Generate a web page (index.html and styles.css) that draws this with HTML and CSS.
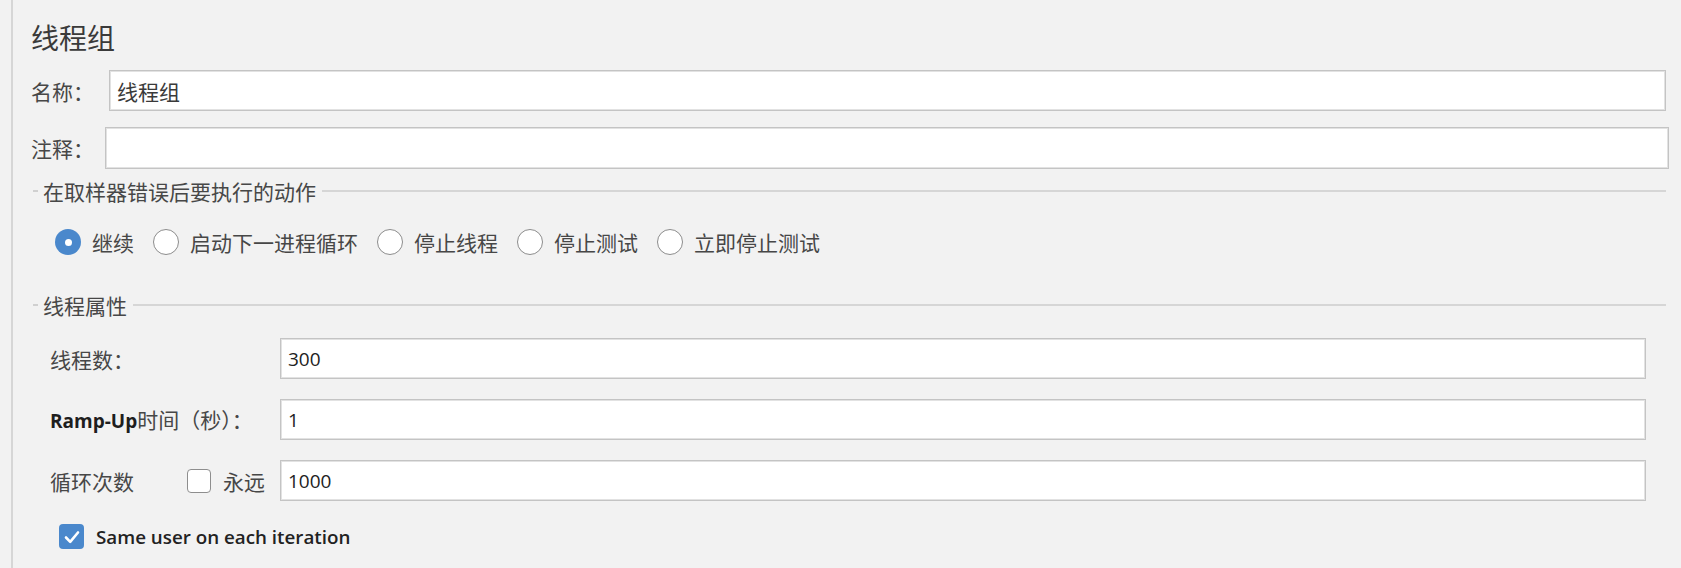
FILE: index.html
```html
<!DOCTYPE html>
<html lang="zh-CN">
<head>
<meta charset="utf-8">
<title>线程组</title>
<link rel="stylesheet" href="styles.css">
</head>
<body>
<div class="panel">
  <div class="title">线程组</div>

  <div class="row row-name">
    <div class="label label-name">名称：</div>
    <div class="field">线程组</div>
  </div>
  <div class="row row-comment">
    <div class="label label-comment">注释：</div>
    <div class="field field-comment"></div>
  </div>

  <div class="section-head section-error">
    <span class="tick"></span>
    <span class="section-title">在取样器错误后要执行的动作</span>
    <span class="rule"></span>
  </div>
  <div class="radios">
    <div class="radio-item"><span class="radio checked"></span><span class="radio-text">继续</span></div>
    <div class="radio-item"><span class="radio"></span><span class="radio-text">启动下一进程循环</span></div>
    <div class="radio-item"><span class="radio"></span><span class="radio-text">停止线程</span></div>
    <div class="radio-item"><span class="radio"></span><span class="radio-text">停止测试</span></div>
    <div class="radio-item"><span class="radio"></span><span class="radio-text">立即停止测试</span></div>
  </div>

  <div class="section-head section-props">
    <span class="tick"></span>
    <span class="section-title">线程属性</span>
    <span class="rule"></span>
  </div>
  <div class="props">
    <div class="prop-row">
      <div class="prop-label">线程数：</div>
      <div class="field num">300</div>
    </div>
    <div class="prop-row">
      <div class="prop-label"><span class="latin bold">Ramp-Up</span>时间（秒）：</div>
      <div class="field num">1</div>
    </div>
    <div class="prop-row">
      <div class="prop-label loop-label">
        <span class="loop-text">循环次数</span>
        <span class="checkbox"></span>
        <span class="forever">永远</span>
      </div>
      <div class="field num">1000</div>
    </div>
  </div>
  <div class="same-user">
    <span class="checkbox checked"><svg viewBox="0 0 24 24" width="24" height="24"><path d="M6 12.5 L10.2 16.8 L18 7.5" fill="none" stroke="#ffffff" stroke-width="2.6" stroke-linecap="round" stroke-linejoin="round"/></svg></span>
    <span class="latin same-text">Same user on each iteration</span>
  </div>
</div>
</body>
</html>
```

FILE: styles.css
```css
html, body {
  margin: 0;
  padding: 0;
  background: #f2f2f2;
}

body {
  font-family: "Noto Sans CJK SC", "Open Sans", sans-serif;
  font-size: 21px;
  color: #474747;
  height: 568px;
  overflow: hidden;
}

.panel {
  margin-left: 11px;
  border-left: 2px solid #d6d6d6;
  height: 568px;
  box-sizing: border-box;
  padding: 19px 0 0 18px;
}

.title {
  font-size: 28px;
  line-height: 36px;
  color: #3a3a3a;
  height: 36px;
}

.row {
  display: flex;
  align-items: center;
}

.row-name {
  margin-top: 15px;
  height: 41px;
  margin-right: 15px;
}

.row-comment {
  margin-top: 16px;
  height: 42px;
  margin-right: 12px;
}

.label {
  flex: none;
  line-height: 24px;
}

.label-name { width: 78px; }
.label-comment { width: 74px; }

.field {
  flex: 1;
  height: 100%;
  box-sizing: border-box;
  background: #ffffff;
  border: 1px solid #c4c4c4;
  box-shadow: inset 0 0 0 1px #e2e2e2;
  padding: 0 7px;
  display: flex;
  align-items: center;
  color: #3a3a3a;
}

.section-head {
  display: flex;
  align-items: center;
  height: 24px;
  margin-left: 2px;
  margin-right: 15px;
}

.section-error { margin-top: 10px; }
.section-props { margin-top: 38px; }

.tick {
  width: 5px;
  height: 2px;
  background: #d0d0d0;
  flex: none;
  margin-right: 5px;
}

.section-title {
  line-height: 24px;
  color: #474747;
  flex: none;
}

.rule {
  flex: 1;
  height: 2px;
  background: #d6d6d6;
  margin-left: 6px;
}

.radios {
  display: flex;
  align-items: center;
  height: 26px;
  margin-top: 26px;
  margin-left: 24px;
}

.radio-item {
  display: flex;
  align-items: center;
  margin-right: 19px;
}

.radio {
  width: 26px;
  height: 26px;
  box-sizing: border-box;
  border-radius: 50%;
  border: 1.5px solid #8c8c8c;
  background: #ffffff;
  margin-right: 11px;
  position: relative;
  flex: none;
}

.radio.checked {
  border: none;
  background: #4a88cc;
}

.radio.checked::after {
  content: "";
  position: absolute;
  left: 9.5px;
  top: 9.5px;
  width: 7px;
  height: 7px;
  border-radius: 50%;
  background: #ffffff;
}

.radio-text {
  line-height: 26px;
  color: #474747;
}

.props {
  margin-top: 21px;
  margin-left: 19px;
  margin-right: 35px;
  display: flex;
  flex-direction: column;
  gap: 20px;
}

.prop-row {
  display: flex;
  align-items: center;
  height: 41px;
}

.prop-label {
  width: 230px;
  flex: none;
  line-height: 26px;
  color: #474747;
  white-space: nowrap;
}

.latin {
  font-family: "Open Sans", "Noto Sans CJK SC", sans-serif;
  font-size: 19px;
}

.bold {
  font-weight: 700;
  color: #1e1e1e;
}

.num {
  font-family: "Open Sans", sans-serif;
  font-size: 19px;
  color: #222222;
}

.loop-label {
  display: flex;
  align-items: center;
}

.loop-text {
  width: 137px;
  flex: none;
}

.checkbox {
  width: 24px;
  height: 24px;
  box-sizing: border-box;
  border: 1.5px solid #8e8e8e;
  border-radius: 4px;
  background: #ffffff;
  flex: none;
  display: flex;
  align-items: center;
  justify-content: center;
}

.checkbox.checked {
  width: 25px;
  height: 25px;
  border: none;
  background: #4a88cc;
}

.forever {
  margin-left: 12px;
}

.same-user {
  display: flex;
  align-items: center;
  height: 25px;
  margin-top: 23px;
  margin-left: 28px;
}

.same-text {
  margin-left: 12px;
  color: #222222;
  font-weight: 600;
  font-size: 18.8px;
}
```
